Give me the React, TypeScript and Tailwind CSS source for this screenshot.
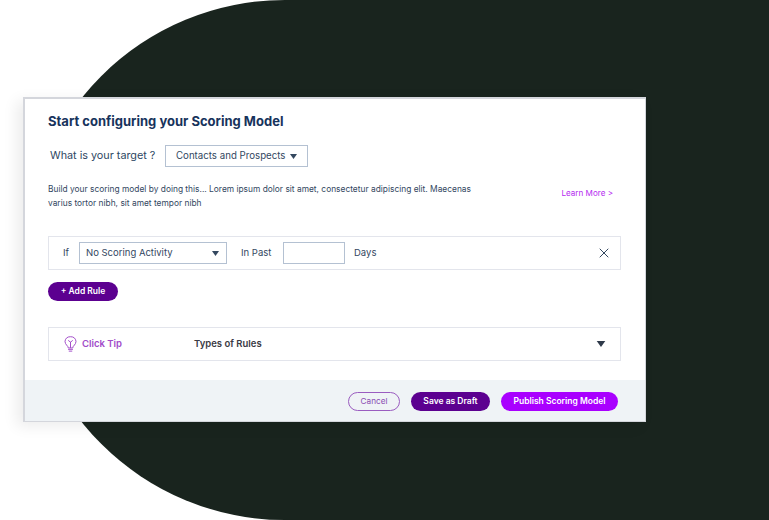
import { X } from 'lucide-react'

const Caret = ({ className }: { className: string }) => (
  <svg viewBox="0 0 10 7" className={className} fill="currentColor">
    <path d="M0 0h10L5 7z" />
  </svg>
)

const Bulb = () => (
  <svg viewBox="0 0 14 18" className="h-[16px] w-[13px] text-[#a24bc9]" fill="none" stroke="currentColor" strokeWidth="1.1" strokeLinecap="round" strokeLinejoin="round">
    <path d="M4.5 13c0-2-3.7-3.2-3.7-7A6.2 6.2 0 0 1 7 .8 6.2 6.2 0 0 1 13.200 6c0 3.800-3.700 5-3.700 7z" />
    <path d="M4.700 15h4.600M5.500 17h3M7 13V7M4.800 5.200 7 7l2.200-1.800" />
  </svg>
)

export default function App() {
  return (
    <div className="relative h-[520px] w-[769px] overflow-hidden bg-white pl-[23px] pt-[97px] font-['Inter',sans-serif] text-[#33475f]">
      {/* dark backdrop */}
      <div className="absolute bottom-0 left-[25px] right-0 top-0 rounded-l-[260px] bg-[#19241e]" />

      <div className="relative flex h-[325px] w-[623px] flex-col border-b border-l-2 border-r border-t-2 border-[#d4d6dc] bg-white shadow-[-6px_4px_14px_rgba(0,0,0,0.08)]">
        <div className="flex-1 pl-[23px] pr-[24px]">
          <h1 className="mt-[13px] text-[13px] font-bold leading-[18px] text-[#17335c]">Start configuring your Scoring Model</h1>

          <div className="mt-[15px] flex items-center pl-[2px]">
            <span className="w-[115px] text-[10.800px] text-[#2e4763]">What is your target ?</span>
            <div className="flex h-[22px] w-[143px] items-center gap-[5px] border border-[#b4c1d2] pl-[10px] text-[9.700px] text-[#33475f]">
              Contacts and Prospects
              <Caret className="h-[5px] w-[7px] text-[#33475f]" />
            </div>
          </div>

          <div className="mt-[15px] flex items-start justify-between pr-[8px]">
            <p className="w-[440px] text-[8.400px] leading-[14px] text-[#33475f]">
              Build your scoring model by doing this... Lorem ipsum dolor sit amet, consectetur adipiscing elit. Maecenas varius tortor nibh, sit amet tempor nibh
            </p>
            <span className="mt-[4px] text-[8.100px] leading-[14px] text-[#b52cf0]">Learn More &gt;</span>
          </div>

          <div className="mt-[26px] flex h-[34px] items-center border border-[#e3e5ec] pl-[14px] pr-[8px] text-[9.500px]">
            <span className="w-[16px]">If</span>
            <div className="flex h-[22px] w-[148px] items-center justify-between border border-[#b4c1d2] pl-[6px] pr-[7px]">
              No Scoring Activity
              <Caret className="h-[5px] w-[7px] text-[#33475f]" />
            </div>
            <span className="ml-[14px] w-[42px]">In Past</span>
            <div className="h-[22px] w-[62px] border border-[#b4c1d2]" />
            <span className="ml-[9px]">Days</span>
            <X className="ml-auto h-[16px] w-[16px] text-[#33475f]" strokeWidth={1.500} />
          </div>

          <button className="mt-[12px] block h-[19px] w-[70px] rounded-full bg-[#5c0090] text-[8.500px] font-semibold text-white">+ Add Rule</button>

          <div className="mt-[26px] flex h-[34px] items-center border border-[#e3e5ec] pl-[15px] pr-[14px]">
            <Bulb />
            <span className="ml-[5px] w-[112px] text-[9.500px] font-semibold text-[#a24bc9]">Click Tip</span>
            <span className="text-[9.500px] font-semibold text-[#3a3a44]">Types of Rules</span>
            <Caret className="ml-auto h-[6px] w-[10px] text-[#2f3a4a]" />
          </div>
        </div>

        <div className="flex h-[41px] items-center justify-end gap-[11px] bg-[#eff3f6] pr-[27px] pt-[2px]">
          <button className="h-[19px] w-[52px] rounded-full border border-[#9a5cc0] text-[8.200px] text-[#8a4cb3]">Cancel</button>
          <button className="h-[19px] w-[79px] rounded-full bg-[#5c0090] text-[8.500px] font-semibold text-white">Save as Draft</button>
          <button className="h-[19px] w-[117px] rounded-full bg-[#a900ff] text-[8.500px] font-semibold text-white">Publish Scoring Model</button>
        </div>
      </div>
    </div>
  )
}
